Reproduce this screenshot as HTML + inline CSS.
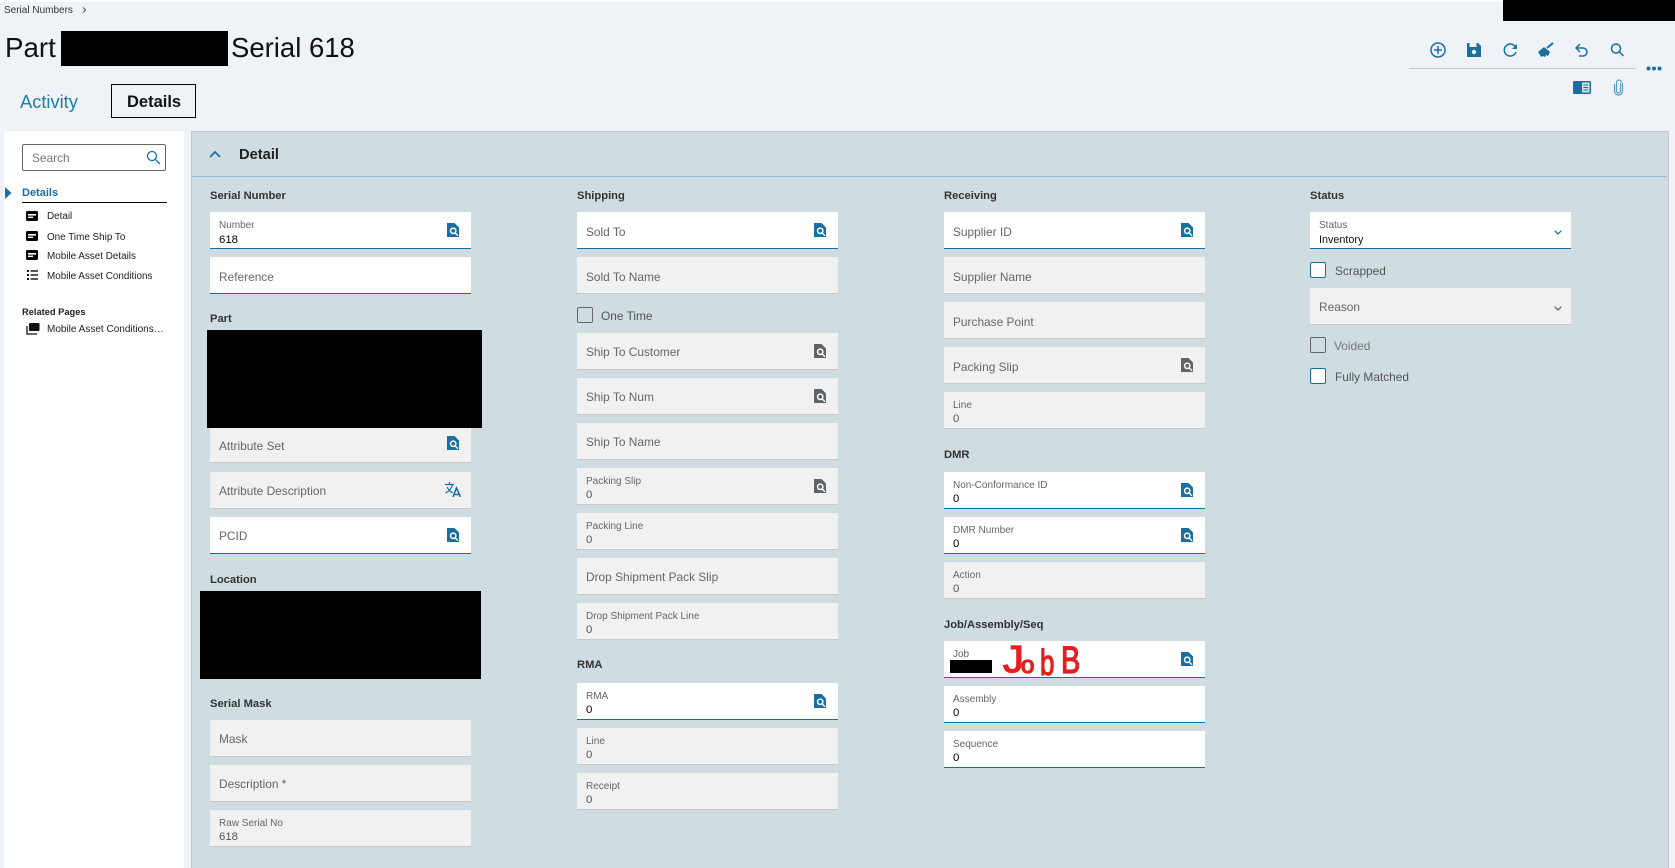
<!DOCTYPE html>
<html>
<head>
<meta charset="utf-8">
<title>Serial Numbers</title>
<style>
html,body{margin:0;padding:0;}
body{width:1675px;height:868px;position:relative;overflow:hidden;background:#eff3f7;font-family:"Liberation Sans",sans-serif;color:#333;}
.a{position:absolute;white-space:nowrap;}
.f{position:absolute;width:261px;height:37px;box-sizing:border-box;}
.w{background:#fff;border-bottom:1.5px solid #1a6fa0;}
.g{background:#f1f1f1;border-bottom:1px solid #c9c9c9;}
.l{position:absolute;left:9px;top:13px;font-size:11.9px;line-height:14px;color:#666;white-space:nowrap;}
.l.u{top:12px;}
.s{position:absolute;left:9px;top:7.5px;font-size:10px;line-height:12px;color:#666;white-space:nowrap;}
.v{position:absolute;left:9px;top:21px;font-size:11.4px;line-height:13px;color:#000;white-space:nowrap;}
.g .v{color:#555;}
.h{position:absolute;font-size:11.2px;font-weight:bold;line-height:14px;color:#333;white-space:nowrap;}
.i{position:absolute;left:237px;top:11px;width:12px;height:14px;}
.c{position:absolute;width:16px;height:16px;box-sizing:border-box;background:#fff;border:1px solid #1a6fa0;border-radius:2px;}
.c.d{background:transparent;border-color:#666;}
.cl{position:absolute;font-size:11.9px;line-height:14px;color:#555;white-space:nowrap;}
.n{position:absolute;left:47px;font-size:9.9px;line-height:12px;color:#222;white-space:nowrap;}
.r{position:absolute;background:#000;}
</style>
</head>
<body>
<svg width="0" height="0" style="position:absolute">
<symbol id="doc" viewBox="0 0 12 14"><path d="M0 0H7.5L12 4.5V14H0Z" fill="currentColor"/><circle cx="6.2" cy="7.8" r="3.4" fill="#fff"/><circle cx="6.2" cy="7.8" r="1.9" fill="currentColor"/><path d="M8.3 10L11 12.8" stroke="#fff" stroke-width="1.4"/></symbol>
<symbol id="card" viewBox="0 0 12 10"><rect x="0" y="0" width="12" height="10" rx="1.5" fill="#000"/><rect x="2" y="3" width="8" height="1.6" fill="#fff"/><rect x="2" y="5.6" width="5" height="1.4" fill="#fff"/></symbol>
<symbol id="chev" viewBox="0 0 8 5"><path d="M.7 .7L4 4L7.3 .7" fill="none" stroke="currentColor" stroke-width="1.3"/></symbol>
</svg>

<div class="a" style="left:0;top:0;width:1675px;height:2px;background:#fff"></div>

<!-- header -->
<div class="a" style="left:4px;top:4px;font-size:10px;line-height:13px;color:#333">Serial Numbers</div>
<svg class="a" style="left:82px;top:7px" width="5" height="6" viewBox="0 0 5 6"><path d="M1 .5L3.5 3L1 5.5" fill="none" stroke="#555" stroke-width="1"/></svg>
<div class="a" style="left:5px;top:31px;font-size:27.7px;line-height:34px;color:#111">Part</div>
<div class="r" style="left:61px;top:31px;width:167px;height:35px"></div>
<div class="a" style="left:231px;top:31px;font-size:27.5px;line-height:34px;color:#111">Serial 618</div>
<div class="r" style="left:1503px;top:0;width:172px;height:21px"></div>

<div class="a" style="left:20px;top:91px;font-size:18.3px;line-height:22px;color:#1f7ea8">Activity</div>
<div class="a" style="left:111px;top:84px;width:85px;height:34px;box-sizing:border-box;border:1px solid #000;"></div>
<div class="a" style="left:127px;top:92px;font-size:16.5px;line-height:20px;font-weight:bold;color:#111">Details</div>

<!-- toolbar icons -->
<svg class="a" style="left:1425px;top:38px" width="205" height="24" viewBox="0 0 205 24" fill="none" stroke="#1a6fa0" stroke-width="1.5">
  <circle cx="13" cy="12" r="7"/><path d="M13 8V16M9 12H17"/>
  <path d="M42 5H53L56 8V19H42Z" fill="#1a6fa0" stroke="none"/><rect x="44.5" y="5" width="7" height="4" fill="#eff3f7" stroke="none"/><circle cx="49" cy="14" r="2.2" fill="#eff3f7" stroke="none"/>
  <path d="M90.5 9A6 6 0 1 0 91 14"/><path d="M92 6V11H87Z" fill="#1a6fa0" stroke="none"/>
  <path d="M113 14L119 9L125 14L123 18L121 17L120 19L118 18L116 19L115 17Z" fill="#1a6fa0" stroke="none"/><path d="M122 10L128 5" stroke-width="2"/>
  <path d="M152 10H158A4 4 0 0 1 158 18H154" /><path d="M155 6L151 10L155 14"/>
  <circle cx="191" cy="10.500" r="4.500"/><path d="M194.500 14L198.500 18"/>
</svg>
<div class="a" style="left:1409px;top:68px;width:227px;height:1px;background:#c8c8c8"></div>
<svg class="a" style="left:1646px;top:66px" width="16" height="5" viewBox="0 0 16 5" fill="#1a6fa0"><circle cx="2.500" cy="2.500" r="2"/><circle cx="8" cy="2.500" r="2"/><circle cx="13.500" cy="2.500" r="2"/></svg>
<svg class="a" style="left:1573px;top:81px" width="18" height="13" viewBox="0 0 18 13"><rect width="18" height="13" rx="1.500" fill="#1a6fa0"/><rect x="9" y="1.500" width="7.500" height="10" fill="#cfe0ea"/><path d="M10.500 4H15M10.500 6.500H15M10.500 9H15" stroke="#1a6fa0" stroke-width="1"/></svg>
<svg class="a" style="left:1613px;top:79px" width="11" height="17" viewBox="0 0 11 17" fill="none" stroke="#5a9cc0" stroke-width="1.200"><path d="M7.500 4V12A2 2 0 0 1 3.500 12V3.500A2.500 2.500 0 0 1 8.500 3.500 M1.500 5V12A4 4 0 0 0 9.500 12V4"/></svg>

<!-- sidebar -->
<div class="a" style="left:4px;top:131px;width:180px;height:737px;background:#fff"></div>
<div class="a" style="left:22px;top:144px;width:144px;height:27px;box-sizing:border-box;border:1px solid #666;border-radius:2px;background:#fff"></div>
<div class="a" style="left:32px;top:151px;font-size:11.9px;line-height:14px;color:#777">Search</div>
<svg class="a" style="left:146px;top:150px" width="15" height="15" viewBox="0 0 15 15" fill="none" stroke="#1a6fa0" stroke-width="1.300"><circle cx="6" cy="6" r="4.500"/><path d="M9.300 9.300L14 14"/></svg>
<svg class="a" style="left:5px;top:187px" width="7" height="12" viewBox="0 0 7 12"><path d="M0 0L6.500 6L0 12Z" fill="#1a6fa0"/></svg>
<div class="a" style="left:22px;top:186px;font-size:11px;font-weight:bold;line-height:14px;color:#1a6fa0">Details</div>
<div class="a" style="left:22px;top:202px;width:145px;height:1px;background:#000"></div>

<svg class="a" style="left:26px;top:211px" width="12" height="10"><use href="#card"/></svg>
<div class="n" style="top:211px">Detail</div>
<svg class="a" style="left:26px;top:231px" width="12" height="10"><use href="#card"/></svg>
<div class="n" style="top:232px">One Time Ship To</div>
<svg class="a" style="left:26px;top:250px" width="12" height="10"><use href="#card"/></svg>
<div class="n" style="top:251px">Mobile Asset Details</div>
<svg class="a" style="left:27px;top:270px" width="11" height="10" viewBox="0 0 11 10" fill="#111"><rect width="2" height="2"/><rect y="4" width="2" height="2"/><rect y="8" width="2" height="2"/><rect x="3.500" y=".3" width="7.500" height="1.400"/><rect x="3.500" y="4.300" width="7.500" height="1.400"/><rect x="3.500" y="8.300" width="7.500" height="1.400"/></svg>
<div class="n" style="top:271px">Mobile Asset Conditions</div>
<div class="a" style="left:22px;top:306px;font-size:9.300px;font-weight:bold;line-height:12px;color:#222">Related Pages</div>
<svg class="a" style="left:26px;top:323px" width="14" height="12" viewBox="0 0 14 12"><rect x="3" y="0" width="10.500" height="8" rx="1" fill="#111"/><path d="M1 3V11H11" fill="none" stroke="#111" stroke-width="1.300"/></svg>
<div class="n" style="top:324px;font-size:10px">Mobile Asset Conditions…</div>

<!-- panel -->
<div class="a" style="left:191px;top:131px;width:1478px;height:737px;box-sizing:border-box;background:#cfdce1;border:1px solid #c6c9ca;border-bottom:0"></div>
<div class="a" style="left:192px;top:176px;width:1475px;height:1px;background:#92bfcf"></div>
<svg class="a" style="left:209px;top:150px" width="12" height="8" viewBox="0 0 12 8"><path d="M1 7L6 2L11 7" fill="none" stroke="#1a6fa0" stroke-width="1.700"/></svg>
<div class="a" style="left:239px;top:146px;font-size:14.700px;font-weight:bold;line-height:18px;color:#222">Detail</div>

<!-- column 1 -->
<div class="h" style="left:210px;top:189px">Serial Number</div>
<div class="f w" style="left:210px;top:212px;color:#1a6fa0"><div class="s">Number</div><div class="v" style="top:22px">618</div><svg class="i"><use href="#doc"/></svg></div>
<div class="f w" style="left:210px;top:257px"><div class="l">Reference</div></div>
<div class="h" style="left:210px;top:312px">Part</div>
<div class="r" style="left:207px;top:330px;width:275px;height:98px"></div>
<div class="f g" style="left:210px;top:428px;height:35px;color:#1a6fa0"><div class="l" style="top:11px">Attribute Set</div><svg class="i" style="top:8px"><use href="#doc"/></svg></div>
<div class="f g" style="left:210px;top:472px;color:#1a6fa0"><div class="l u">Attribute Description</div>
<svg class="a" style="left:235px;top:10px" width="16" height="15" viewBox="0 0 16 15" fill="none" stroke="#1a6fa0" stroke-width="1.200"><path d="M0 2.500H9M4.500 0V2.500M7.500 2.500C6.500 6.500 3.500 9.500 .5 11M2 5C3.500 8 6 10 8 11"/><path d="M8 15L11.500 6L15.500 15M9.300 12.500H14" stroke-width="1.500"/></svg></div>
<div class="f w" style="left:210px;top:517px;color:#1a6fa0"><div class="l u">PCID</div><svg class="i"><use href="#doc"/></svg></div>
<div class="h" style="left:210px;top:573px">Location</div>
<div class="r" style="left:200px;top:591px;width:281px;height:88px"></div>
<div class="h" style="left:210px;top:697px">Serial Mask</div>
<div class="f g" style="left:210px;top:720px"><div class="l u">Mask</div></div>
<div class="f g" style="left:210px;top:765px"><div class="l u">Description *</div></div>
<div class="f g" style="left:210px;top:810px"><div class="s">Raw Serial No</div><div class="v">618</div></div>

<!-- column 2 -->
<div class="h" style="left:577px;top:189px">Shipping</div>
<div class="f w" style="left:577px;top:212px;color:#1a6fa0"><div class="l">Sold To</div><svg class="i"><use href="#doc"/></svg></div>
<div class="f g" style="left:577px;top:257px"><div class="l">Sold To Name</div></div>
<div class="c d" style="left:577px;top:307px"></div>
<div class="cl" style="left:601px;top:309px">One Time</div>
<div class="f g" style="left:577px;top:333px;color:#5f6468"><div class="l u">Ship To Customer</div><svg class="i"><use href="#doc"/></svg></div>
<div class="f g" style="left:577px;top:378px;color:#5f6468"><div class="l u">Ship To Num</div><svg class="i"><use href="#doc"/></svg></div>
<div class="f g" style="left:577px;top:423px"><div class="l u">Ship To Name</div></div>
<div class="f g" style="left:577px;top:468px;color:#5f6468"><div class="s">Packing Slip</div><div class="v">0</div><svg class="i"><use href="#doc"/></svg></div>
<div class="f g" style="left:577px;top:513px"><div class="s">Packing Line</div><div class="v">0</div></div>
<div class="f g" style="left:577px;top:558px"><div class="l u">Drop Shipment Pack Slip</div></div>
<div class="f g" style="left:577px;top:603px"><div class="s">Drop Shipment Pack Line</div><div class="v">0</div></div>
<div class="h" style="left:577px;top:658px">RMA</div>
<div class="f w" style="left:577px;top:683px;color:#1a6fa0"><div class="s">RMA</div><div class="v">0</div><svg class="i"><use href="#doc"/></svg></div>
<div class="f g" style="left:577px;top:728px"><div class="s">Line</div><div class="v">0</div></div>
<div class="f g" style="left:577px;top:773px"><div class="s">Receipt</div><div class="v">0</div></div>

<!-- column 3 -->
<div class="h" style="left:944px;top:189px">Receiving</div>
<div class="f w" style="left:944px;top:212px;color:#1a6fa0"><div class="l">Supplier ID</div><svg class="i"><use href="#doc"/></svg></div>
<div class="f g" style="left:944px;top:257px"><div class="l">Supplier Name</div></div>
<div class="f g" style="left:944px;top:302px"><div class="l">Purchase Point</div></div>
<div class="f g" style="left:944px;top:347px;color:#5f6468"><div class="l">Packing Slip</div><svg class="i"><use href="#doc"/></svg></div>
<div class="f g" style="left:944px;top:392px"><div class="s">Line</div><div class="v">0</div></div>
<div class="h" style="left:944px;top:448px">DMR</div>
<div class="f w" style="left:944px;top:472px;color:#1a6fa0"><div class="s">Non-Conformance ID</div><div class="v">0</div><svg class="i"><use href="#doc"/></svg></div>
<div class="f w" style="left:944px;top:517px;color:#1a6fa0"><div class="s">DMR Number</div><div class="v">0</div><svg class="i"><use href="#doc"/></svg></div>
<div class="f g" style="left:944px;top:562px"><div class="s">Action</div><div class="v">0</div></div>
<div class="h" style="left:944px;top:618px">Job/Assembly/Seq</div>
<div class="f w" style="left:944px;top:641px;color:#1a6fa0"><div class="s">Job</div><svg class="i"><use href="#doc"/></svg></div>
<div class="r" style="left:950px;top:660px;width:42px;height:13px"></div>
<svg class="a" style="left:1000px;top:638px" width="90" height="42" font-family="Liberation Sans, sans-serif" fill="#e41f1f" stroke="#e41f1f" stroke-width="1.300">
  <text transform="translate(3,34) scale(1.1,1)" font-size="38">J</text>
  <text transform="translate(21,35)" font-size="24">o</text>
  <text transform="translate(40,37) scale(.72,1)" font-size="36">b</text>
  <text transform="translate(61,35) scale(.76,1)" font-size="38">B</text>
</svg>
<div class="f w" style="left:944px;top:686px"><div class="s">Assembly</div><div class="v">0</div></div>
<div class="f w" style="left:944px;top:731px"><div class="s">Sequence</div><div class="v">0</div></div>

<!-- column 4 -->
<div class="h" style="left:1310px;top:189px">Status</div>
<div class="f w" style="left:1310px;top:212px;color:#1a6fa0"><div class="s">Status</div><div class="v" style="font-size:10.800px;color:#111;top:22px">Inventory</div><svg class="a" style="left:244px;top:18px" width="8" height="5"><use href="#chev"/></svg></div>
<div class="c" style="left:1310px;top:262px"></div>
<div class="cl" style="left:1335px;top:264px">Scrapped</div>
<div class="f g" style="left:1310px;top:288px;color:#5f6468"><div class="l u">Reason</div><svg class="a" style="left:244px;top:18px" width="8" height="5"><use href="#chev"/></svg></div>
<div class="c d" style="left:1310px;top:337px"></div>
<div class="cl" style="left:1334px;top:339px;color:#777">Voided</div>
<div class="c" style="left:1310px;top:368px"></div>
<div class="cl" style="left:1335px;top:370px">Fully Matched</div>
</body>
</html>
